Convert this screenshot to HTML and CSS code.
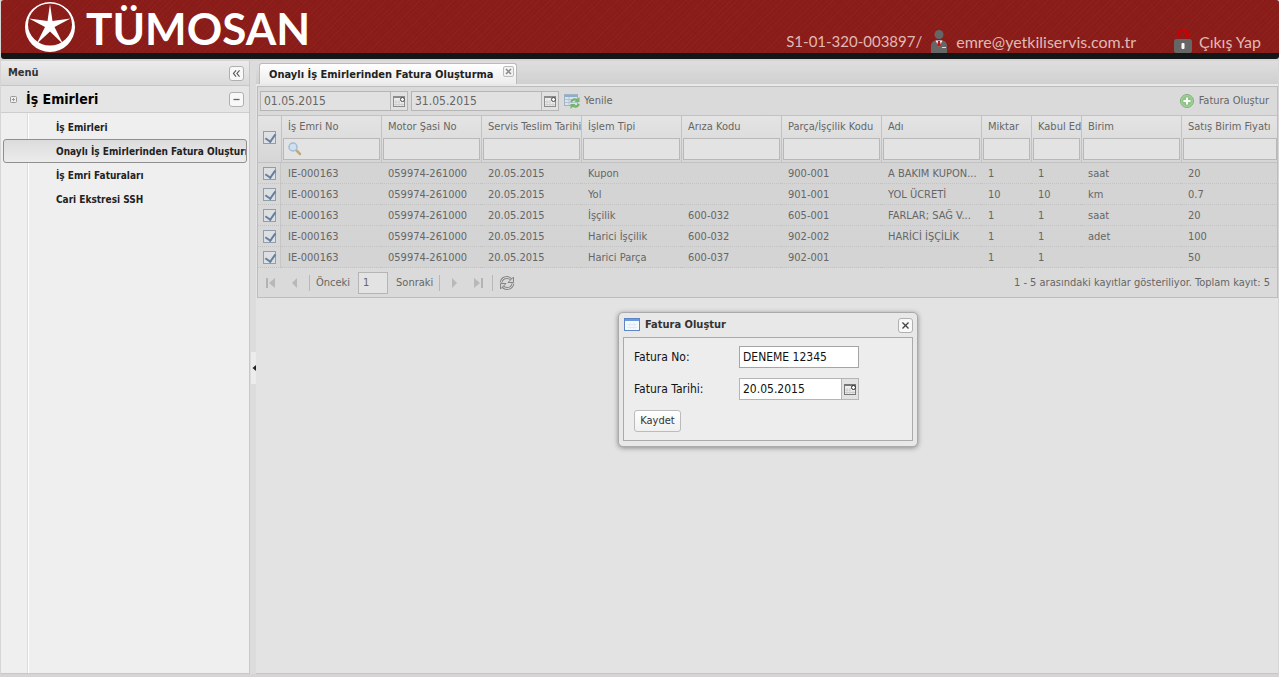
FILE: index.html
```html
<!DOCTYPE html>
<html lang="tr">
<head>
<meta charset="utf-8">
<title>TÜMOSAN</title>
<link rel="stylesheet" href="styles.css">
</head>
<body>
<svg width="0" height="0" class="defs" aria-hidden="true">
  <symbol id="cal" viewBox="0 0 16 16"><rect x="2.500" y="3.500" width="11" height="10" fill="#eee" stroke="#777"/><path d="M2 4h12" stroke="#777" stroke-width="2"/><path d="M5 7v6M8 7v6M11 10v3M3 9h6M3 11.500h10" stroke="#ccc"/><circle cx="11.500" cy="6.500" r="2" fill="#fff" stroke="#222"/></symbol>
</svg>
<header class="top">
  <div class="brand">
    <svg class="logo" viewBox="0 0 52 52" aria-hidden="true"><path fill="#fff" fill-rule="evenodd" d="M26 1a25 25 0 1 0 0 50a25 25 0 1 0 0-50zM26 2.500a22 21 0 1 1 0 42a22 21 0 1 1 0-42z"/><path fill="#fff" d="M26 3l2.500 17 18-2.500-16 8.500 8.500 17L26 30.500 12.500 43 21 26 5 17.500 23.500 20z"/></svg>
    <span class="name">TÜMOSAN</span>
  </div>
  <div class="user">
    <span class="code">S1-01-320-003897/</span>
    <svg class="person" width="18" height="24" viewBox="0 0 18 24" aria-hidden="true"><circle cx="9" cy="5.500" r="4.500" fill="#666"/><path d="M1 24v-7q0-5 5-5.500h6q5 .5 5 5.500v7z" fill="#666"/><path d="M5.500 11.500h7L9 18z" fill="#fff"/><path d="M8 12h2l.8 4L9 18l-1.800-2z" fill="#c01515"/><path d="M12 18.500h4" stroke="#ddd"/></svg>
    <span class="mail">emre@yetkiliservis.com.tr</span>
    <a href="#" class="logout"><svg width="18" height="24" viewBox="0 0 18 24" aria-hidden="true"><path d="M4.500 9V5a4.500 3.500 0 0 1 9 0v4" fill="none" stroke="#c00" stroke-width="3"/><rect x="0" y="10" width="18" height="14" rx="2.500" fill="#666"/><rect x="7.500" y="14" width="3" height="6" rx="1" fill="#fff"/></svg>Çıkış Yap</a>
  </div>
</header>
<div class="page">
  <aside class="side">
    <div class="side-head">Menü<button class="tool" type="button" aria-label="Daralt"><svg viewBox="0 0 15 15"><path d="M7 4L4 7.500 7 11M11 4L8 7.500 11 11" fill="none" stroke="#555" stroke-width="1.300"/></svg></button></div>
    <div class="group"><svg class="plus" viewBox="0 0 7 7" aria-hidden="true"><rect x=".5" y=".5" width="6" height="6" rx="1" fill="#eee" stroke="#999"/><path d="M2 3.500h3M3.500 2v3" stroke="#999"/></svg><h2>İş Emirleri</h2><button class="tool" type="button" aria-label="Kapat"><svg viewBox="0 0 15 15"><path d="M4 7.500h7" stroke="#666" stroke-width="1.500"/></svg></button></div>
    <nav class="menu">
      <a href="#">İş Emirleri</a>
      <a href="#" class="on">Onaylı İş Emirlerinden Fatura Oluşturma</a>
      <a href="#">İş Emri Faturaları</a>
      <a href="#">Cari Ekstresi SSH</a>
    </nav>
  </aside>
  <div class="split"><svg width="5" height="32" viewBox="0 0 5 32" aria-hidden="true"><rect width="5" height="32" rx="1" fill="#ececec"/><path d="M5 13v6L1.500 16z" fill="#222"/></svg></div>
  <main class="content">
    <div class="tabs"><div class="tab">Onaylı İş Emirlerinden Fatura Oluşturma<button type="button" aria-label="Sekmeyi kapat"><svg viewBox="0 0 11 11"><rect x=".5" y=".5" width="10" height="10" rx="1.500" fill="#f2f2f2" stroke="#bbb"/><path d="M3 3l5 5M8 3L3 8" stroke="#888" stroke-width="1.500"/></svg></button></div></div>
    <section class="panel">
      <div class="grid">
        <div class="toolbar">
          <span class="date"><input type="text" value="01.05.2015" aria-label="Başlangıç"><button type="button" aria-label="Takvim"><svg><use href="#cal"/></svg></button></span>
          <span class="date"><input type="text" value="31.05.2015" aria-label="Bitiş"><button type="button" aria-label="Takvim"><svg><use href="#cal"/></svg></button></span>
          <button class="plain" type="button"><svg width="16" height="16" viewBox="0 0 16 16" aria-hidden="true"><rect x=".5" y="1.500" width="13" height="11" fill="#d9e2ea" stroke="#9fb2c6"/><path d="M1 3h12" stroke="#8faccc" stroke-width="2"/><path d="M1 6.500h12M1 9.500h12M5 4v8" stroke="#b5c4d2"/><path d="M7 9q2-4 6-2M15 11q-2 4-6 2" fill="none" stroke="#74b56c" stroke-width="2"/><path d="M15.500 4v5h-5zM6.500 16v-5h5z" fill="#74b56c"/></svg>Yenile</button>
          <button class="plain add" type="button"><svg width="16" height="16" viewBox="0 0 16 16" aria-hidden="true"><circle cx="8" cy="8" r="6.500" fill="#a8d3a0" stroke="#7fae7c"/><circle cx="8" cy="8" r="5" fill="#8cc684"/><path d="M8 4.500v7M4.500 8h7" stroke="#fff" stroke-width="2"/></svg>Fatura Oluştur</button>
        </div>
        <table>
          <colgroup><col class="c-check"><col><col><col><col><col><col><col><col class="c-num"><col class="c-num"><col><col class="c-rest"></colgroup>
          <thead><tr>
            <th><input type="checkbox" checked aria-label="Tümünü seç"></th>
            <th><div>İş Emri No</div><span class="search"><input type="text" aria-label="İş Emri No"><svg width="16" height="16" viewBox="0 0 16 16" aria-hidden="true"><path d="M9.500 9.500l3.500 3.500" stroke="#c3a878" stroke-width="2.500" stroke-linecap="round"/><circle cx="6" cy="6" r="4" fill="#cfe0ef" stroke="#a3bcd6" stroke-width="1.500"/></svg></span></th>
            <th><div>Motor Şasi No</div><input type="text" aria-label="Motor Şasi No"></th>
            <th><div>Servis Teslim Tarihi</div><input type="text" aria-label="Servis Teslim Tarihi"></th>
            <th><div>İşlem Tipi</div><input type="text" aria-label="İşlem Tipi"></th>
            <th><div>Arıza Kodu</div><input type="text" aria-label="Arıza Kodu"></th>
            <th><div>Parça/İşçilik Kodu</div><input type="text" aria-label="Parça/İşçilik Kodu"></th>
            <th><div>Adı</div><input type="text" aria-label="Adı"></th>
            <th><div>Miktar</div><input type="text" aria-label="Miktar"></th>
            <th><div>Kabul Edilen</div><input type="text" aria-label="Kabul Edilen"></th>
            <th><div>Birim</div><input type="text" aria-label="Birim"></th>
            <th><div>Satış Birim Fiyatı</div><input type="text" aria-label="Satış Birim Fiyatı"></th>
          </tr></thead>
          <tbody>
            <tr><td><input type="checkbox" checked aria-label="Seç"></td><td>IE-000163</td><td>059974-261000</td><td>20.05.2015</td><td>Kupon</td><td></td><td>900-001</td><td>A BAKIM KUPON...</td><td>1</td><td>1</td><td>saat</td><td>20</td></tr>
            <tr><td><input type="checkbox" checked aria-label="Seç"></td><td>IE-000163</td><td>059974-261000</td><td>20.05.2015</td><td>Yol</td><td></td><td>901-001</td><td>YOL ÜCRETİ</td><td>10</td><td>10</td><td>km</td><td>0.7</td></tr>
            <tr><td><input type="checkbox" checked aria-label="Seç"></td><td>IE-000163</td><td>059974-261000</td><td>20.05.2015</td><td>İşçilik</td><td>600-032</td><td>605-001</td><td>FARLAR; SAĞ V...</td><td>1</td><td>1</td><td>saat</td><td>20</td></tr>
            <tr><td><input type="checkbox" checked aria-label="Seç"></td><td>IE-000163</td><td>059974-261000</td><td>20.05.2015</td><td>Harici İşçilik</td><td>600-032</td><td>902-002</td><td>HARİCİ İŞÇİLİK</td><td>1</td><td>1</td><td>adet</td><td>100</td></tr>
            <tr><td><input type="checkbox" checked aria-label="Seç"></td><td>IE-000163</td><td>059974-261000</td><td>20.05.2015</td><td>Harici Parça</td><td>600-037</td><td>902-001</td><td></td><td>1</td><td>1</td><td></td><td>50</td></tr>
          </tbody>
        </table>
        <div class="pager">
          <button type="button" aria-label="İlk sayfa"><svg viewBox="0 0 16 16"><path d="M4 3v10" stroke="#b3b3b3" stroke-width="2"/><path d="M12 3v10L6 8z" fill="#b8b8b8"/></svg></button>
          <button type="button" aria-label="Önceki sayfa"><svg viewBox="0 0 16 16"><path d="M10 3v10L5 8z" fill="#b8b8b8"/></svg></button>
          <i></i>
          <label for="pg">Önceki</label><input id="pg" type="text" value="1"><span class="next">Sonraki</span>
          <i></i>
          <button type="button" aria-label="Sonraki sayfa"><svg viewBox="0 0 16 16"><path d="M6 3v10l5-5z" fill="#b8b8b8"/></svg></button>
          <button type="button" aria-label="Son sayfa"><svg viewBox="0 0 16 16"><path d="M4 3v10l6-5z" fill="#b8b8b8"/><path d="M12 3v10" stroke="#b3b3b3" stroke-width="2"/></svg></button>
          <i></i>
          <button type="button" aria-label="Yenile"><svg viewBox="0 0 16 16"><path d="M2 7.500Q3 2.500 8 2.500q3 0 4.500 2.500M14 8.500q-1 5-6 5-3 0-4.500-2.500" fill="none" stroke="#858585" stroke-width="2.800"/><path d="M2 7.500Q3 2.500 8 2.500q3 0 4.500 2.500M14 8.500q-1 5-6 5-3 0-4.500-2.500" fill="none" stroke="#ddd"/><path d="M14.500 2v5.500H9zM1.500 14V8.500H7z" fill="#d5d5d5" stroke="#858585"/></svg></button>
          <span class="info">1 - 5 arasındaki kayıtlar gösteriliyor. Toplam kayıt: 5</span>
        </div>
      </div>
      <div class="overlay">
        <form class="dialog" role="dialog" aria-label="Fatura Oluştur">
          <div class="title"><svg width="16" height="16" viewBox="0 0 16 16" aria-hidden="true"><rect x=".5" y="1.500" width="15" height="12" fill="#f6fafe" stroke="#5d86c4"/><path d="M1 3h14" stroke="#6c9ade" stroke-width="2"/><path d="M3 7.500h10M3 10.500h10M6 6v6M10 6v6" stroke="#e2eaf4"/></svg>Fatura Oluştur<button class="tool" type="button" aria-label="Kapat"><svg viewBox="0 0 15 15"><path d="M4 4l7 7M11 4l-7 7" stroke="#444" stroke-width="1.500"/></svg></button></div>
          <div class="body">
            <label for="no">Fatura No:</label><input id="no" class="txt" type="text" value="DENEME 12345">
            <label for="dt">Fatura Tarihi:</label><span class="date"><input id="dt" type="text" value="20.05.2015"><button type="button" aria-label="Takvim"><svg><use href="#cal"/></svg></button></span>
            <button class="save" type="button">Kaydet</button>
          </div>
        </form>
      </div>
    </section>
  </main>
</div>
</body>
</html>
```
FILE: styles.css
```css
* { box-sizing: border-box; }
body { margin: 0; height: 100vh; display: flex; flex-direction: column; background: #d6d4d4; font: 11px/14px Tahoma, "DejaVu Sans Condensed", "Noto Sans", sans-serif; color: #333; overflow: hidden; }
button, input { font: inherit; color: inherit; margin: 0; padding: 0; }
button { display: flex; align-items: center; justify-content: center; border: 0; background: none; }
a { color: inherit; text-decoration: none; }
.defs { position: absolute; }

.top { flex: none; height: 59px; margin-left: 1px; display: flex; justify-content: space-between; border-bottom: 6px solid #121616; border-radius: 3px; background-color: #8a1d1a; background-image: repeating-linear-gradient(45deg, #7a12122e 0 1px, #0000 1px 3px), repeating-linear-gradient(-45deg, #a52c2430 0 1px, #0000 1px 4px); color: #e0b9b4; }
.brand { display: flex; align-items: center; gap: 10px; padding-left: 23px; }
.logo { width: 52px; height: 52px; }
.name { padding-top: 3px; font: bold 44px/50px Lato, sans-serif; color: #fff; }
.user { display: flex; align-items: flex-end; gap: 8px; padding-right: 18px; font: 16px/23px Lato, sans-serif; }
.user svg { flex: none; }
.code { font-size: 15px; }
.mail { margin-right: 30px; }
.logout { display: flex; align-items: flex-end; gap: 7px; }

.page { flex: 1; min-height: 0; display: flex; padding: 2px 1px 3px; }
.side { flex: none; width: 249px; display: flex; flex-direction: column; background: #efefef; border: 1px solid #c8c8c8; border-width: 0 1px 1px 0; font-weight: bold; }
.side-head { display: flex; align-items: center; justify-content: space-between; height: 25px; padding: 0 5px 0 7px; border-bottom: 1px solid #c6c6c6; background: linear-gradient(#ebebeb, #d9d9d9); line-height: 16px; }
.tool { width: 15px; height: 15px; border: 1px solid #b0b0b0; border-radius: 3px; background: #f8f8f8; }
.tool svg { width: 13px; height: 13px; }
.group { display: flex; align-items: center; height: 27px; padding: 0 5px 0 9px; border-bottom: 1px solid #cdcdcd; background: #e5e5e5; }
.group h2 { flex: 1; margin: 0 0 0 9px; font-size: 14px; line-height: 18px; color: #000; }
.plus { width: 7px; height: 7px; }
.menu { flex: 1; padding: 2px 2px 0; background: linear-gradient(90deg, #0000 26px, #dcdcdc 26px 27px, #fff 27px 28px, #0000 28px); }
.menu a { display: block; height: 24px; padding-left: 52px; border: 1px solid transparent; border-radius: 3px; line-height: 24px; font-size: 10px; white-space: nowrap; overflow: hidden; color: #222; }
.menu .on { border-color: #8f8f8f; background: linear-gradient(#dcdcdc, #ececec); }
.split { flex: none; width: 6px; display: flex; align-items: center; justify-content: center; background: #dcdcdc; }

.content { flex: 1; min-width: 0; display: flex; flex-direction: column; }
.tabs { display: flex; align-items: flex-end; height: 23px; padding-left: 3px; background: linear-gradient(#dedede, #d0d0d0); }
.tab { display: flex; gap: 9px; height: 21px; padding: 0 2px 0 9px; border: 1px solid #bbb; border-bottom: 0; border-radius: 3px 3px 0 0; background: linear-gradient(#fff, #ececec); font-weight: bold; line-height: 21px; color: #222; }
.tab button { width: 11px; height: 11px; margin-top: 2px; }
.tab svg { width: 11px; height: 11px; }
.panel { flex: 1; min-height: 0; position: relative; padding-left: 1px; border-top: 2px solid #e8e8e8; background: #e3e3e3; border-bottom: 1px solid #c6c6c6; }
.grid { border: 1px solid #bdbdbd; background: #dadada; color: #666; }
.toolbar { display: flex; align-items: center; gap: 3px; height: 28px; padding: 0 8px 0 2px; }
.date { display: flex; width: 148px; height: 20px; border: 1px solid #b5b5b5; background: #e1e1e1; font-size: 12px; }
.date input { flex: 1; min-width: 0; border: 0; padding: 0 3px; background: none; }
.date button { width: 17px; border-left: 1px solid #b5b5b5; }
.date svg { width: 16px; height: 16px; }
.toolbar .date svg, input[type="checkbox"] { opacity: .8; }
.plain { gap: 4px; margin-left: 2px; line-height: 16px; }
.toolbar .add { margin-left: auto; }
table { width: 100%; table-layout: fixed; border-collapse: separate; border-spacing: 0; }
col { width: 100px; }
.c-check { width: 23px; }
.c-num { width: 50px; }
.c-rest { width: auto; }
th { height: 48px; padding: 0; border: 1px solid #c2c2c2; border-width: 1px 0 1px 1px; background: linear-gradient(#e4e4e4, #d6d6d6); font-weight: normal; text-align: left; vertical-align: top; }
th:first-child { padding-bottom: 4px; border-left: 0; vertical-align: middle; }
th div { height: 22px; padding-left: 6px; line-height: 21px; white-space: nowrap; overflow: hidden; }
th input[type="text"] { display: block; width: calc(100% - 2px); height: 22px; margin-left: 1px; border: 1px solid #b8b8b8; background: #e3e3e3; }
th:last-child input[type="text"] { width: calc(100% - 1px); }
.search { display: block; position: relative; }
.search svg { position: absolute; left: 5px; top: 3px; }
td { height: 21px; padding: 2px 4px 0 7px; border-bottom: 1px dotted #c3c3c3; background: #d4d4d4; line-height: 18px; white-space: nowrap; overflow: hidden; }
td:first-child { padding: 0; border-right: 1px solid #c6c6c6; background: #d8d8d8; }
input[type="checkbox"] { appearance: none; display: block; width: 13px; height: 13px; margin: 0 auto; border: 1px solid #7d8fa3; background: #dfe2e5; }
input[type="checkbox"]:checked::after { content: ""; display: block; width: 5px; height: 8px; margin: 0 0 0 3px; border: solid #4a6890; border-width: 0 2px 2px 0; transform: rotate(35deg); }
.pager { display: flex; align-items: center; height: 29px; padding: 0 7px 0 5px; line-height: 16px; }
.pager button { width: 16px; height: 16px; margin-right: 8px; }
.pager svg { width: 16px; height: 16px; }
.pager i { width: 1px; height: 16px; margin: 0 6px 0 -2px; background: #b8b8b8; }
.pager input { width: 30px; height: 22px; margin: 0 8px; padding-left: 4px; border: 1px solid #b5b5b5; background: #e3e3e3; }
.pager .next { margin-right: 8px; }
.info { margin-left: auto; }

.overlay { position: absolute; inset: 0; display: grid; place-items: center; padding-left: 2px; }
.dialog { width: 300px; padding: 0 4px 5px; border: 1px solid #aaa; border-radius: 5px; background: #e8e8e8; box-shadow: 0 1px 5px #888; }
.title { display: flex; align-items: center; gap: 5px; height: 24px; padding-left: 1px; font-weight: bold; line-height: 16px; color: #333; }
.title .tool { margin-left: auto; }
.body { display: grid; grid-template-columns: 105px 120px; gap: 10px 0; align-items: center; padding: 8px 10px; border: 1px solid #aaa; background: #ededed; font-size: 12px; color: #111; }
.txt { height: 22px; padding: 0 3px; border: 1px solid #a5a5a5; background: #fff; }
.body .date { width: 120px; height: 22px; background: #fff; }
.body .date button { background: #e2e2e2; }
.save { width: 47px; height: 22px; border: 1px solid #bbb; border-radius: 3px; background: linear-gradient(#fff, #f0f0f0); font-size: 11px; color: #333; }
```
